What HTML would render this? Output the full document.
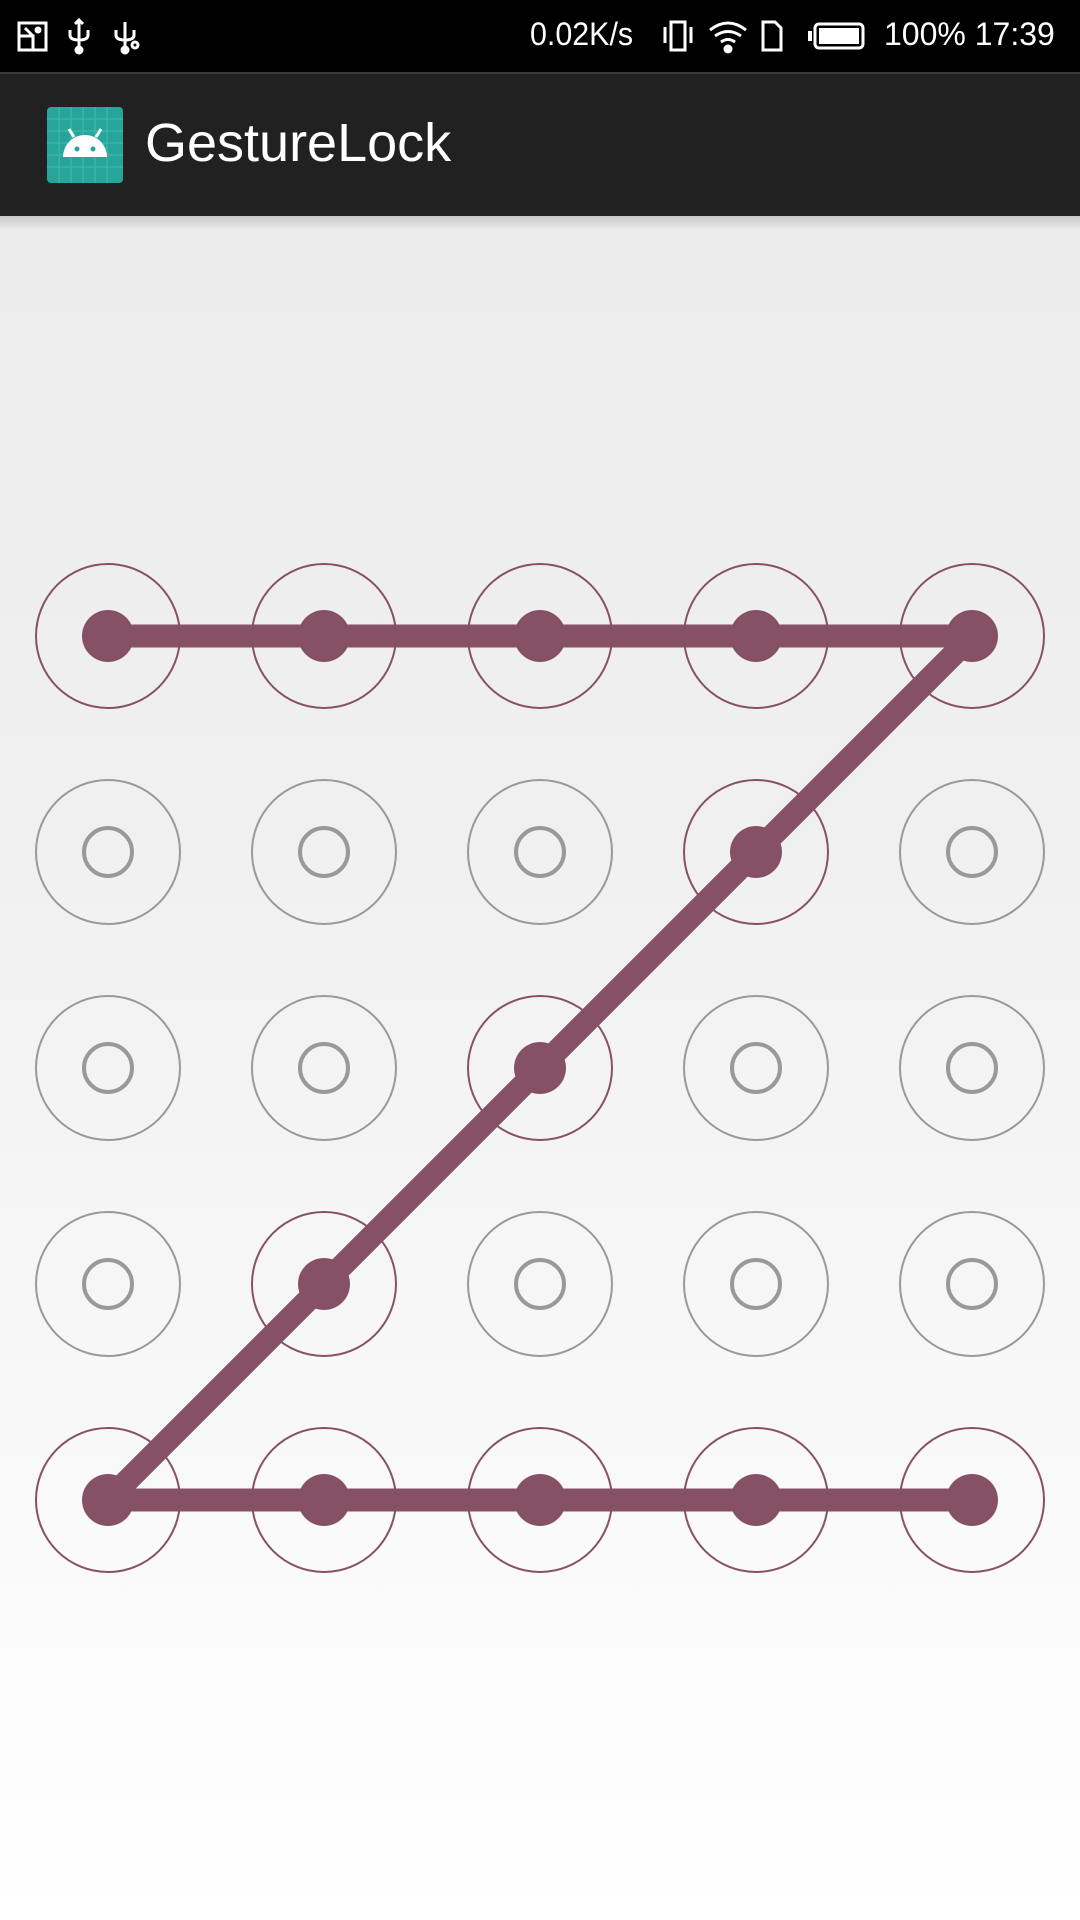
<!DOCTYPE html>
<html><head><meta charset="utf-8"><style>
html,body{margin:0;padding:0;width:1080px;height:1920px;overflow:hidden;font-family:"Liberation Sans",sans-serif}
.sb{position:absolute;left:0;top:0;width:1080px;height:72px;background:#000;color:#fff;font-size:32px}
.ab{position:absolute;left:0;top:72px;width:1080px;height:144px;background:#212121;border-top:2px solid #3a3a3a;box-sizing:border-box}
.bg{position:absolute;left:0;top:216px;width:1080px;height:1704px;background:linear-gradient(#ececec,#f0f0f0 35%,#fff 100%)}
.sh{position:absolute;left:0;top:216px;width:1080px;height:14px;background:linear-gradient(rgba(0,0,0,.15),rgba(0,0,0,0))}
</style></head><body>
<div class="bg"></div><div class="sh"></div>
<div class="sb">
<svg width="160" height="72" style="position:absolute;left:0;top:0" fill="none" stroke="#fff" stroke-width="3">
<rect x="19" y="23" width="27" height="27"/><path d="M19 36h14v14M33 36l-8 -8"/><circle cx="38" cy="30" r="2" fill="#fff"/>
<path d="M79 22v28M70 30v5q0 5 9 5q9 0 9-5v-5M75 24l4-4 4 4"/><circle cx="79" cy="50" r="3" fill="#fff"/>
<path d="M125 22v28M116 30v5q0 5 9 5q9 0 9-5v-5"/><circle cx="125" cy="50" r="3" fill="#fff"/><circle cx="135" cy="45" r="3"/>
</svg>
<span style="position:absolute;left:530px;top:16px;font-size:32px;transform:scaleX(.95);transform-origin:left">0.02K/s</span>
<svg width="220" height="72" style="position:absolute;left:660px;top:0" fill="none" stroke="#fff" stroke-width="3">
<rect x="11" y="22" width="14" height="28"/><path d="M5 27v16M31 27v16"/>
<path d="M50 30q18-14 36 0M55 36q13-9 26 0M61 42q7-5 14 0"/><circle cx="68" cy="49" r="3" fill="#fff"/>
<path d="M103 22h12l6 6v22h-18z"/>
<path d="M150 31v10" stroke-width="4"/><rect x="155" y="24" width="48" height="24" rx="4"/><rect x="159" y="28" width="40" height="16" fill="#fff" stroke="none"/>
</svg>
<span style="position:absolute;left:884px;top:16px;font-size:32px">100% 17:39</span>
</div>
<div class="ab">
<svg width="76" height="76" style="position:absolute;left:47px;top:33px">
<rect x="0" y="0" width="76" height="76" rx="4" fill="#26a69a"/>
<g stroke="#4fc3b7" stroke-width="1" opacity=".7"><path d="M0 12h76M0 24h76M0 36h76M0 48h76M0 60h76M12 0v76M24 0v76M36 0v76M48 0v76M60 0v76"/></g>
<path d="M16 50a22 22 0 0 1 44 0z" fill="#fff"/><path d="M22 22l5 8M54 22l-5 8" stroke="#fff" stroke-width="3"/>
<circle cx="30" cy="42" r="2.5" fill="#26a69a"/><circle cx="46" cy="42" r="2.5" fill="#26a69a"/>
</svg>
<span style="position:absolute;left:145px;top:38px;font-size:54px;color:#fff">GestureLock</span>
</div>
<svg width="1080" height="1920" style="position:absolute;left:0;top:0">
<g fill="none" stroke="#999" stroke-width="2">
<circle cx="108" cy="852" r="72"/><circle cx="324" cy="852" r="72"/><circle cx="540" cy="852" r="72"/><circle cx="972" cy="852" r="72"/>
<circle cx="108" cy="1068" r="72"/><circle cx="324" cy="1068" r="72"/><circle cx="756" cy="1068" r="72"/><circle cx="972" cy="1068" r="72"/>
<circle cx="108" cy="1284" r="72"/><circle cx="540" cy="1284" r="72"/><circle cx="756" cy="1284" r="72"/><circle cx="972" cy="1284" r="72"/>
</g>
<g fill="none" stroke="#999" stroke-width="4">
<circle cx="108" cy="852" r="24"/><circle cx="324" cy="852" r="24"/><circle cx="540" cy="852" r="24"/><circle cx="972" cy="852" r="24"/>
<circle cx="108" cy="1068" r="24"/><circle cx="324" cy="1068" r="24"/><circle cx="756" cy="1068" r="24"/><circle cx="972" cy="1068" r="24"/>
<circle cx="108" cy="1284" r="24"/><circle cx="540" cy="1284" r="24"/><circle cx="756" cy="1284" r="24"/><circle cx="972" cy="1284" r="24"/>
</g>
<g fill="none" stroke="#875165" stroke-width="2">
<circle cx="108" cy="636" r="72"/><circle cx="324" cy="636" r="72"/><circle cx="540" cy="636" r="72"/><circle cx="756" cy="636" r="72"/><circle cx="972" cy="636" r="72"/>
<circle cx="756" cy="852" r="72"/><circle cx="540" cy="1068" r="72"/><circle cx="324" cy="1284" r="72"/>
<circle cx="108" cy="1500" r="72"/><circle cx="324" cy="1500" r="72"/><circle cx="540" cy="1500" r="72"/><circle cx="756" cy="1500" r="72"/><circle cx="972" cy="1500" r="72"/>
</g>
<path d="M108 636H972L108 1500H972" fill="none" stroke="#875165" stroke-width="23" stroke-linejoin="round"/>
<g fill="#875165">
<circle cx="108" cy="636" r="26"/><circle cx="324" cy="636" r="26"/><circle cx="540" cy="636" r="26"/><circle cx="756" cy="636" r="26"/><circle cx="972" cy="636" r="26"/>
<circle cx="756" cy="852" r="26"/><circle cx="540" cy="1068" r="26"/><circle cx="324" cy="1284" r="26"/>
<circle cx="108" cy="1500" r="26"/><circle cx="324" cy="1500" r="26"/><circle cx="540" cy="1500" r="26"/><circle cx="756" cy="1500" r="26"/><circle cx="972" cy="1500" r="26"/>
</g>
</svg>
</body></html>
